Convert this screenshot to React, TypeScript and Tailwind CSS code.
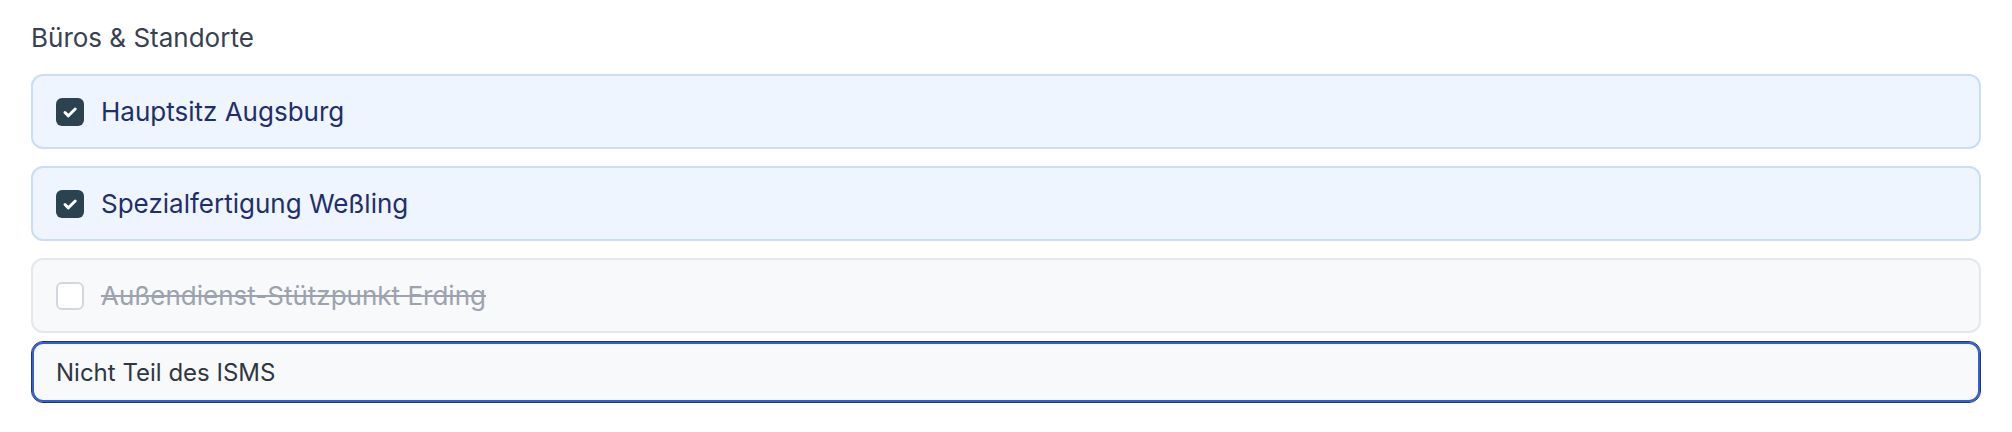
import React, { useEffect, useRef, useState } from 'react'

type Site = { id: string; label: string; inScope: boolean }

const initialSites: Site[] = [
  { id: 'aug', label: 'Hauptsitz Augsburg', inScope: true },
  { id: 'wes', label: 'Spezialfertigung Weßling', inScope: true },
  { id: 'erd', label: 'Außendienst-Stützpunkt Erding', inScope: false },
]

function CheckIcon() {
  return (
    <svg width="20" height="20" viewBox="0 0 20 20" fill="none">
      <path
        d="M5 10.5l3.4 3.3L15.2 7"
        stroke="white"
        strokeWidth="3"
        strokeLinecap="round"
        strokeLinejoin="round"
      />
    </svg>
  )
}

export default function App() {
  const [sites, setSites] = useState(initialSites)
  const [reason, setReason] = useState('Nicht Teil des ISMS')
  const inputRef = useRef<HTMLInputElement | null>(null)

  // focus the reason field with caret at the end
  useEffect(() => {
    const el = inputRef.current
    if (el) {
      el.focus()
      el.setSelectionRange(el.value.length, el.value.length)
    }
  }, [])

  const toggle = (id: string) =>
    setSites((prev) => prev.map((s) => (s.id === id ? { ...s, inScope: !s.inScope } : s)))

  return (
    <div
      className="min-h-[432px] w-full bg-white px-[31px] pt-[20px]"
      style={{ fontFamily: 'Inter, "Noto Sans", sans-serif' }}
    >
      <h3 className="text-[26px] leading-[36px] font-normal text-[#374151]">Büros &amp; Standorte</h3>
      <div className="mt-[18px] flex flex-col gap-[17px]">
        {sites.map((site, idx) => (
          <div key={site.id} className="flex flex-col gap-[8px]">
            <label
              className={`flex h-[75px] cursor-pointer items-center gap-[17px] rounded-[12px] border-2 px-[23px] ${
                site.inScope ? 'border-[#c8ddf8] bg-[#eef5fe]' : 'border-[#e6e7ea] bg-[#f8f9fb]'
              }`}
              onClick={() => toggle(site.id)}
            >
              {site.inScope ? (
                <span className="flex h-[28px] w-[28px] items-center justify-center rounded-[6px] bg-[#2b4350]">
                  <CheckIcon />
                </span>
              ) : (
                <span className="h-[28px] w-[28px] rounded-[6px] border-2 border-[#d3d6dc] bg-white" />
              )}
              <span
                className={`text-[26px] leading-[36px] ${
                  site.inScope ? 'text-[#1f2f6b]' : 'text-[#9ca3af] line-through'
                }`}
              >
                {site.label}
              </span>
            </label>
            {!site.inScope && idx === sites.length - 1 && (
              <input
                ref={inputRef}
                value={reason}
                onChange={(e) => setReason(e.target.value)}
                className="h-[62px] w-full rounded-[12px] border border-[#263a4a] bg-[#f8f9fb] px-[24px] text-[24px] text-[#2f3744] caret-[#1f2937] shadow-[inset_0_0_0_2px_#2f5fe0] outline-none"
              />
            )}
          </div>
        ))}
      </div>
    </div>
  )
}
